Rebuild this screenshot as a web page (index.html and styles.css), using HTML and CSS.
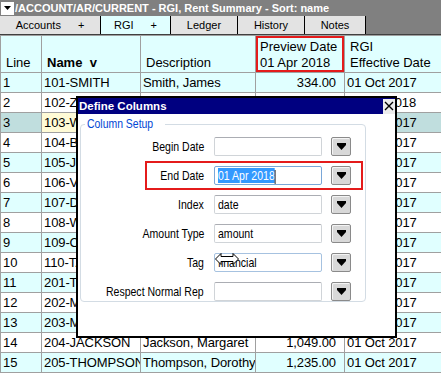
FILE: index.html
```html
<!DOCTYPE html>
<html lang="en">
<head>
    <meta charset="UTF-8">
    <title>RGI, Rent Summary</title>
    <link rel="stylesheet" href="styles.css">
</head>
<body>
    <div class="titlebar">
        <span class="menu-btn">
            <svg width="7" height="4" viewBox="0 0 7 4"><polygon points="0,0 7,0 3.5,4" fill="#000"/></svg>
        </span>
        <span class="title">/ACCOUNT/AR/CURRENT - RGI, Rent Summary - Sort: name</span>
    </div>

    <div class="tabs">
        <div class="tab tab-accounts"><span>Accounts</span><span>+</span></div>
        <div class="tab tab-rgi active"><span>RGI</span><span>+</span></div>
        <div class="tab tab-ledger"><span>Ledger</span></div>
        <div class="tab tab-history"><span>History</span></div>
        <div class="tab tab-notes"><span>Notes</span></div>
    </div>

    <table class="grid">
        <colgroup>
            <col class="c-line">
            <col class="c-name">
            <col class="c-desc">
            <col class="c-amt">
            <col class="c-date">
        </colgroup>
        <thead>
            <tr>
                <th>Line</th>
                <th class="sort">Name&nbsp; v</th>
                <th>Description</th>
                <th class="highlight">Preview Date<br>01 Apr 2018</th>
                <th>RGI<br>Effective Date</th>
            </tr>
        </thead>
        <tbody>
            <tr><td>1</td><td class="name">101-SMITH</td><td>Smith, James</td><td class="num">334.00</td><td>01 Oct 2017</td></tr>
            <tr><td>2</td><td class="name">102-ZHANG</td><td>Zhang, Li</td><td class="num">612.00</td><td>01 Apr 2018</td></tr>
            <tr class="sel"><td>3</td><td class="name">103-WILSON</td><td>Wilson, Mary</td><td class="num">488.00</td><td>01 Oct 2017</td></tr>
            <tr><td>4</td><td class="name">104-BROWN</td><td>Brown, Robert</td><td class="num">705.00</td><td>01 Oct 2017</td></tr>
            <tr><td>5</td><td class="name">105-JONES</td><td>Jones, Patricia</td><td class="num">560.00</td><td>01 Oct 2017</td></tr>
            <tr><td>6</td><td class="name">106-VARGAS</td><td>Vargas, Maria</td><td class="num">421.00</td><td>01 Oct 2017</td></tr>
            <tr><td>7</td><td class="name">107-DAVIS</td><td>Davis, Linda</td><td class="num">893.00</td><td>01 Oct 2017</td></tr>
            <tr><td>8</td><td class="name">108-WALKER</td><td>Walker, Susan</td><td class="num">377.00</td><td>01 Oct 2017</td></tr>
            <tr><td>9</td><td class="name">109-CLARK</td><td>Clark, Thomas</td><td class="num">940.00</td><td>01 Oct 2017</td></tr>
            <tr><td>10</td><td class="name">110-TAYLOR</td><td>Taylor, Helen</td><td class="num">515.00</td><td>01 Oct 2017</td></tr>
            <tr><td>11</td><td class="name">201-TURNER</td><td>Turner, Paul</td><td class="num">1,102.00</td><td>01 Oct 2017</td></tr>
            <tr><td>12</td><td class="name">202-MILLER</td><td>Miller, Karen</td><td class="num">968.00</td><td>01 Oct 2017</td></tr>
            <tr><td>13</td><td class="name">203-MORRIS</td><td>Morris, Nancy</td><td class="num">1,015.00</td><td>01 Oct 2017</td></tr>
            <tr><td>14</td><td class="name">204-JACKSON</td><td>Jackson, Margaret</td><td class="num">1,049.00</td><td>01 Oct 2017</td></tr>
            <tr><td>15</td><td class="name">205-THOMPSON</td><td>Thompson, Dorothy</td><td class="num">1,235.00</td><td>01 Oct 2017</td></tr>
        </tbody>
    </table>

    <div class="dialog">
        <div class="dlg-title">
            <span>Define Columns</span>
            <span class="dlg-close">
                <svg width="10" height="10" viewBox="0 0 10 10"><path d="M1 1 L9 9 M9 1 L1 9" stroke="#000" stroke-width="1.4"/></svg>
            </span>
        </div>
        <fieldset class="group">
            <legend><span class="narrow">Column Setup</span></legend>
            <div class="fields">
                <div class="field">
                    <label><span class="narrow">Begin Date</span></label>
                    <div class="input"></div>
                    <span class="drop"><svg width="9" height="7" viewBox="0 0 9 7"><rect x="0" y="0" width="9" height="2" fill="#000"/><polygon points="0,2 9,2 4.5,7" fill="#000"/></svg></span>
                </div>
                <div class="field hl">
                    <label><span class="narrow">End Date</span></label>
                    <div class="input focus"><span class="txt"><span class="selected">01 Apr 2018</span><span class="caret"></span></span></div>
                    <span class="drop"><svg width="9" height="7" viewBox="0 0 9 7"><rect x="0" y="0" width="9" height="2" fill="#000"/><polygon points="0,2 9,2 4.5,7" fill="#000"/></svg></span>
                </div>
                <div class="field">
                    <label><span class="narrow">Index</span></label>
                    <div class="input"><span class="txt">date</span></div>
                    <span class="drop"><svg width="9" height="7" viewBox="0 0 9 7"><rect x="0" y="0" width="9" height="2" fill="#000"/><polygon points="0,2 9,2 4.5,7" fill="#000"/></svg></span>
                </div>
                <div class="field">
                    <label><span class="narrow">Amount Type</span></label>
                    <div class="input"><span class="txt">amount</span></div>
                    <span class="drop"><svg width="9" height="7" viewBox="0 0 9 7"><rect x="0" y="0" width="9" height="2" fill="#000"/><polygon points="0,2 9,2 4.5,7" fill="#000"/></svg></span>
                </div>
                <div class="field">
                    <label><span class="narrow">Tag</span></label>
                    <div class="input hover"><span class="txt">financial</span>
                        <svg class="cursor" width="24" height="12" viewBox="0 0 24 12"><polygon points="0.5,6 6,0.5 6,3.5 18,3.5 18,0.5 23.5,6 18,11.5 18,8.5 6,8.5 6,11.5" fill="#fff" stroke="#000" stroke-width="1"/></svg>
                    </div>
                    <span class="drop"><svg width="9" height="7" viewBox="0 0 9 7"><rect x="0" y="0" width="9" height="2" fill="#000"/><polygon points="0,2 9,2 4.5,7" fill="#000"/></svg></span>
                </div>
                <div class="field">
                    <label><span class="narrow">Respect Normal Rep</span></label>
                    <div class="input"></div>
                    <span class="drop"><svg width="9" height="7" viewBox="0 0 9 7"><rect x="0" y="0" width="9" height="2" fill="#000"/><polygon points="0,2 9,2 4.5,7" fill="#000"/></svg></span>
                </div>
            </div>
        </fieldset>
    </div>
</body>
</html>
```

FILE: styles.css
```css
body {
    margin: 0;
    width: 441px;
    height: 374px;
    overflow: hidden;
    position: relative;
    font-family: "Liberation Sans", Arial, sans-serif;
    background-color: #fff;
    color: #000;
}
.titlebar {
    height: 16px;
    display: flex;
    align-items: center;
    background-color: #808080;
    color: #fff;
    font-size: 11px;
    font-weight: bold;
}
.menu-btn {
    width: 13px;
    height: 13px;
    margin: 0 1px;
    display: flex;
    align-items: center;
    justify-content: center;
    background-color: #fff;
}
.tabs {
    height: 18px;
    display: flex;
    background-color: #808080;
    border-bottom: 1px solid #404040;
    font-size: 11px;
}
.tab {
    display: flex;
    align-items: center;
    justify-content: center;
    gap: 17px;
    background-color: #e3e3e3;
    border-right: 1px solid #000;
}
.tab.active {
    background-color: #e0ffff;
}
.tab-accounts { width: 100px; }
.tab-rgi { width: 69px; }
.tab-ledger { width: 66px; }
.tab-history { width: 66px; }
.tab-notes { width: 60px; }

.grid {
    width: 441px;
    table-layout: fixed;
    border-collapse: collapse;
    font-size: 13px;
}
.c-line { width: 41px; }
.c-name { width: 99px; }
.c-desc { width: 115px; }
.c-amt { width: 89px; }
.c-date { width: 97px; }
.grid th, .grid td {
    border: 1px solid #a0a0a0;
    white-space: nowrap;
    overflow: hidden;
    text-align: left;
}
.grid th {
    height: 35px;
    padding: 0 2px 1px 5px;
    vertical-align: bottom;
    font-weight: normal;
    line-height: 16px;
    background-color: #e0ffff;
}
.grid th.sort {
    font-weight: bold;
}
.grid th.highlight {
    padding-left: 4px;
    box-shadow: inset 0 0 0 2px #e41b1b;
}
.grid td {
    height: 19px;
    padding: 0 1px 0 2px;
    line-height: 19px;
    letter-spacing: -0.1px;
}
.grid td.num {
    text-align: right;
    padding-right: 8px;
}
.grid tbody tr:nth-child(odd) td {
    background-color: #e0ffff;
}
.grid tbody tr.sel td {
    background-color: #c0dede;
}
.grid tbody tr.sel td.name {
    background-color: #fffbd6;
}

.dialog {
    position: absolute;
    left: 76px;
    top: 96px;
    width: 321px;
    height: 242px;
    box-sizing: border-box;
    border: 2px solid #000;
    background-color: #fff;
}
.dlg-title {
    height: 16px;
    display: flex;
    align-items: center;
    justify-content: space-between;
    padding-left: 1px;
    background-color: #000080;
    color: #fff;
    font-size: 11.5px;
    font-weight: bold;
}
.dlg-close {
    width: 12px;
    height: 15px;
    display: flex;
    align-items: center;
    justify-content: center;
    background-color: #ececec;
}
.group {
    width: 286px;
    height: 184px;
    box-sizing: border-box;
    margin: 4px 0 0 2px;
    padding: 6px 0 0 0;
    border: 1px solid #d3dce4;
    border-radius: 4px;
    font-size: 13px;
}
.group legend {
    margin-left: 4px;
    padding: 0 2px;
    line-height: 13px;
    font-size: 12px;
    color: #0046d5;
}
.group legend .narrow {
    transform: scaleX(0.87);
    transform-origin: left center;
}
.narrow {
    display: inline-block;
    white-space: nowrap;
    transform: scaleX(0.81);
    transform-origin: right center;
}
.fields {
    display: flex;
    flex-direction: column;
    gap: 10px;
}
.field {
    position: relative;
    display: flex;
    align-items: center;
    height: 19px;
}
.field.hl::after {
    content: "";
    position: absolute;
    left: 64px;
    right: 2px;
    top: -5px;
    bottom: -5px;
    border: 2px solid #e41b1b;
}
.field label {
    width: 123px;
    text-align: right;
    white-space: nowrap;
}
.input {
    position: relative;
    width: 108px;
    height: 19px;
    box-sizing: border-box;
    margin-left: 10px;
    padding-left: 3px;
    line-height: 17px;
    white-space: nowrap;
    border: 1px solid #d0d4d8;
    border-top-color: #abadb3;
    border-radius: 2px;
    background-color: #fff;
}
.input .txt {
    display: inline-block;
    transform: scaleX(0.81);
    transform-origin: left center;
}
.input.focus {
    border-color: #7aa7d8;
}
.input.hover {
    border-color: #a6c2e0;
}
.selected {
    background-color: #3399ff;
    color: #fff;
}
.caret {
    display: inline-block;
    width: 1px;
    height: 14px;
    vertical-align: middle;
    background-color: #000;
}
.cursor {
    position: absolute;
    left: 0;
    top: -1px;
}
.drop {
    width: 20px;
    height: 19px;
    box-sizing: border-box;
    margin-left: 9px;
    display: flex;
    align-items: center;
    justify-content: center;
    border: 1px solid #8a8a8a;
    border-radius: 2px;
    background-color: #d8d8d8;
    box-shadow: inset 1px 1px 0 #f4f4f4;
}
```
